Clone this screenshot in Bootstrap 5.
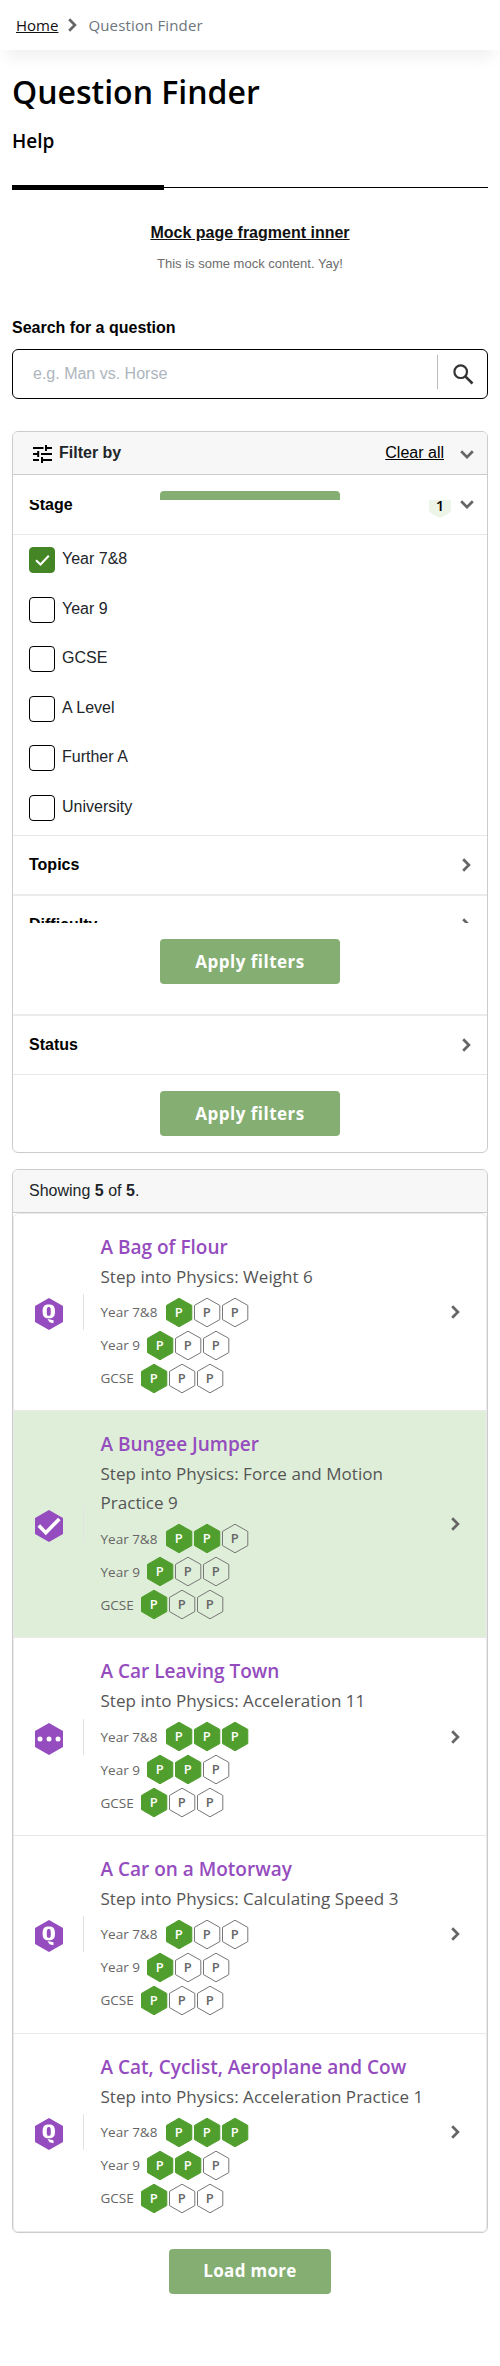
<!DOCTYPE html>
<html lang="en">
<head>
<meta charset="utf-8">
<meta name="viewport" content="width=device-width, initial-scale=1">
<title>Question Finder</title>
<link rel="stylesheet" href="https://cdn.jsdelivr.net/npm/bootstrap@5.3.0/dist/css/bootstrap.min.css">
<style>
body{font-family:"Liberation Sans",Arial,sans-serif;font-size:16px;line-height:24px;color:#212529;background:#fff}
.exo{font-family:"Open Sans","Noto Sans",sans-serif}
.crumbs{height:50px;padding:0 16px;font-size:15px;font-weight:500;background:#fff;box-shadow:0 14px 16px -6px rgba(0,0,0,.06)}
.crumbs a{color:#111}
.crumbs svg{margin:0 11px 0 10px}
.crumbs span{color:#6c757d;letter-spacing:.15px}
.page-title{font-size:32px;font-weight:600;line-height:40px;color:#000;margin:22px 0 0}
.tab-name{font-size:19px;font-weight:600;line-height:28px;color:#000;margin:15px 0 0}
.rule{height:5px;margin-top:30px}
.rule .on{width:152px;height:5px;background:#000}
.rule .off{height:1px;background:#000}
.mock-link{color:#111;font-weight:700;margin-top:31px}
.mock-text{font-size:13px;color:#6c6c6c;line-height:20px;margin-top:9px}
.search-label{font-weight:700;color:#000;margin:42px 0 0;line-height:24px}
.search-box{height:50px;border:1px solid #000;border-radius:6px;margin-top:9px}
.search-box input{border:0;background:none;padding:0 0 0 20px;width:100%;outline:0;color:#212529}
.search-box input::placeholder{color:#adb5bd;opacity:1}
.search-box .sep{width:1px;height:34px;background:#bbb;margin-top:-4px;flex:none}
.search-box svg{flex:none;margin:0 13px 0 15px}
.panel{border:1px solid #ccc;border-radius:6px;overflow:hidden;background:#fff}
.panel-head{height:43px;background:#f7f7f7;border-bottom:1px solid #ccc}
.sec{padding:0 13px 0 16px;font-weight:700;color:#000;height:58px}
.side{margin-right:3px}
.line1{border-bottom:1px solid #e8e8e8}
.line2{border-bottom:2px solid #ebebeb}
.peek{position:absolute;left:0;right:0;top:0;height:25px;background:#fff;padding-top:16px}
.peek span{display:block;width:180px;height:9px;margin:auto;background:#85ae72;border-radius:4px 4px 0 0}
.opts{height:301px;padding:12px 16px 0}
.opt{height:49.6px}
.tick{width:26px;height:26px;border:1px solid #000;border-radius:4px;margin-right:8px;flex:none}
.tick.on{background:#448525;border-color:#448525}
.opt label{line-height:24px;margin-left:-1px}
.go{background:#85ae72!important;color:#fff!important;border:0;border-radius:4px;height:45px;width:180px;padding:0;font-weight:700;font-size:17px;letter-spacing:.5px}
.go.more{width:162px;letter-spacing:.3px}
.q{border:solid #e9e9e9;border-width:0 1px 1px;height:197.6px;padding-left:21px}
.q:first-child{border-top-width:1px;border-radius:6px 6px 0 0;height:198px}
.q:last-child{border-radius:0 0 5px 5px;height:198px}
.q.done{background:#dfeed8;height:227.4px}
.q .hexi{margin:4px 20px 0 0;flex:none}
.q .bar{width:1px;height:36px;background:#e2e2e2;flex:none}
.q .body{padding-left:16.5px;margin-top:2px}
.q h3{font-size:19px;font-weight:600;line-height:30px;color:#944cbe;margin:0;white-space:nowrap}
.q .sub{font-size:17px;line-height:29px;color:#555;white-space:nowrap;margin-bottom:5px;letter-spacing:.04px}
.lvl{height:33px;font-size:13.5px;color:#666}
.lvl span{white-space:nowrap}
.w1{width:65px}.w2{width:46px}.w3{width:40px}
.lvl svg{display:block;width:84px;height:31px}
.lvl text{font:600 13px "Open Sans",sans-serif;text-anchor:middle;fill:#666}
.lvl .f text{fill:#fff}
.lvl polygon{fill:none;stroke:#777;stroke-width:1}
.lvl .f polygon{fill:#509e2e;stroke:#509e2e}
.q .chev{margin-right:26px}
</style>
</head>
<body>
<svg class="d-none">
<symbol id="right" viewBox="0 0 9 14"><path d="M1.200 1.200 6.900 7l-5.700 5.800" fill="none" stroke="#666" stroke-width="2.700"/></symbol>
<symbol id="down" viewBox="0 0 14 9"><path d="M1.200 1.300 7 7.100l5.800-5.800" fill="none" stroke="#666" stroke-width="2.700"/></symbol>
<symbol id="qi" viewBox="0 0 28 32"><path fill="#944cbe" d="M14 0 28 8v16l-14 8L0 24V8z"/><path fill="#fff" fill-rule="evenodd" d="M13.800 6.500c4.300 0 6.200 1.800 6.200 6.900 0 5-1.900 6.900-6.200 6.900s-6.200-1.900-6.200-6.900c0-5.100 1.900-6.900 6.200-6.900zm0 2.500c-1.500 0-2 .9-2 4.400s.5 4.400 2 4.400 2-.9 2-4.400-.5-4.400-2-4.400zM12.500 21l6 1.300v2.900l-4-.9z"/></symbol>
<symbol id="ci" viewBox="0 0 28 32"><path fill="#944cbe" d="M14 0 28 8v16l-14 8L0 24V8z"/><path d="m3.800 15.500 7 7.200L24.300 9" fill="none" stroke="#fff" stroke-width="3.600"/></symbol>
<symbol id="di" viewBox="0 0 28 32"><path fill="#944cbe" d="M14 0 28 8v16l-14 8L0 24V8z"/><g fill="#fff"><circle cx="5" cy="16" r="2.500"/><circle cx="14" cy="16" r="2.500"/><circle cx="23" cy="16" r="2.500"/></g></symbol>
</svg>

<nav class="crumbs exo d-flex align-items-center">
<a href="#">Home</a>
<svg width="9" height="14"><use href="#right"/></svg>
<span>Question Finder</span>
</nav>

<main style="padding:0 12px">
<h1 class="page-title exo">Question Finder</h1>
<h2 class="tab-name exo">Help</h2>
<div class="rule d-flex align-items-center"><div class="on"></div><div class="off flex-grow-1"></div></div>
<div class="text-center mock-link"><a href="#" class="text-reset">Mock page fragment inner</a></div>
<div class="text-center mock-text">This is some mock content. Yay!</div>

<div class="search-label">Search for a question</div>
<div class="search-box d-flex align-items-center">
<input type="text" placeholder="e.g. Man vs. Horse">
<span class="sep"></span>
<svg width="21" height="21" viewBox="0 0 21 21" fill="none" stroke="#333"><circle cx="7.700" cy="7.700" r="6.300" stroke-width="2.200"/><path d="m12.300 12.300 7.200 7.200" stroke-width="2.600"/></svg>
</div>

<section class="panel" style="margin-top:32px;height:722px">
<div class="panel-head d-flex align-items-center" style="padding:0 13px 0 20px">
<svg width="19" height="18" viewBox="0 0 19 18" fill="none" stroke="#000" stroke-width="2" style="margin-top:2px"><path d="M0 3h10.500M13 0v6M13 3h6M0 9h5.500M5.200 6v6M8 9h11M0 15h6M9 12v6M9 15h10"/></svg>
<strong style="margin-left:7px">Filter by</strong>
<a href="#" class="ms-auto" style="color:#000">Clear all</a>
<svg width="14" height="9" style="margin:2px 0 0 16px"><use href="#down"/></svg>
</div>
<div class="sec line1 d-flex align-items-center position-relative" style="height:60px">
<span>Stage</span>
<svg width="22" height="26" viewBox="0 0 22 26" class="ms-auto exo"><path fill="#ecf5e8" d="M11 0 22 6v14l-11 6-11-6V6z"/><text x="11" y="18.500" text-anchor="middle" font-size="15" font-weight="600">1</text></svg>
<svg width="14" height="9" style="margin-left:9px"><use href="#down"/></svg>
<div class="peek"><span></span></div>
</div>
<div class="opts line1">
<div class="opt d-flex align-items-start"><span class="tick on"><svg width="24" height="24" viewBox="0 0 24 24" class="d-block" fill="none" stroke="#fff" stroke-width="2"><path d="m6 12.200 4.500 4.300 8.300-8.700"/></svg></span><label>Year 7&amp;8</label></div>
<div class="opt d-flex align-items-start"><span class="tick"></span><label>Year 9</label></div>
<div class="opt d-flex align-items-start"><span class="tick"></span><label>GCSE</label></div>
<div class="opt d-flex align-items-start"><span class="tick"></span><label>A Level</label></div>
<div class="opt d-flex align-items-start"><span class="tick"></span><label>Further A</label></div>
<div class="opt d-flex align-items-start"><span class="tick"></span><label>University</label></div>
</div>
<div class="sec line2 d-flex align-items-center justify-content-between" style="height:60px"><span>Topics</span><svg class="side" width="9" height="14"><use href="#right"/></svg></div>
<div class="overflow-hidden" style="height:27px"><div class="sec d-flex align-items-center justify-content-between"><span>Difficulty</span><svg class="side" width="9" height="14"><use href="#right"/></svg></div></div>
<div class="line2 text-center" style="height:93px;padding-top:16px"><button class="btn go exo">Apply filters</button></div>
<div class="sec line1 d-flex align-items-center justify-content-between" style="height:59px"><span>Status</span><svg class="side" width="9" height="14"><use href="#right"/></svg></div>
<div class="text-center" style="padding-top:16px"><button class="btn go exo">Apply filters</button></div>
</section>

<section class="panel" style="margin-top:16px">
<div class="panel-head d-flex align-items-center" style="padding-left:16px"><span>Showing <strong>5</strong> of <strong>5</strong>.</span></div>
<div id="results"></div>
</section>
<div class="text-center" style="margin-top:16px"><button class="btn go more exo">Load more</button></div>
</main>

<script src="https://cdn.jsdelivr.net/npm/bootstrap@5.3.0/dist/js/bootstrap.bundle.min.js"></script>
<script>
const questions = [
  ["A Bag of Flour", "Weight 6", "qi", [1,1,1]],
  ["A Bungee Jumper", "Force and Motion<br>Practice 9", "ci", [2,1,1]],
  ["A Car Leaving Town", "Acceleration 11", "di", [3,2,1]],
  ["A Car on a Motorway", "Calculating Speed 3", "qi", [1,1,1]],
  ["A Cat, Cyclist, Aeroplane and Cow", "Acceleration Practice 1", "qi", [3,2,1]]
];
const stages = ["Year 7&amp;8", "Year 9", "GCSE"];
const hexes = n => [0,1,2].map(i => `<g class="${i < n ? "f" : ""}" transform="translate(${i*28} 0)"><polygon points="13,1.200 25.800,8.400 25.800,22.600 13,29.800 .5,22.600 .5,8.400"/><text x="12.800" y="19.700">P</text></g>`).join("");
document.getElementById("results").innerHTML = questions.map(([t, s, icon, lv]) => `
<article class="q exo d-flex align-items-center ${icon === "ci" ? "done" : ""}">
<svg class="hexi" width="28" height="32"><use href="#${icon}"/></svg><span class="bar"></span>
<div class="body"><h3>${t}</h3><div class="sub">Step into Physics: ${s}</div>
${stages.map((y, k) => `<div class="lvl d-flex align-items-center"><span class="w${k+1}">${y}</span><svg>${hexes(lv[k])}</svg></div>`).join("")}</div>
<svg class="chev ms-auto" width="9" height="14"><use href="#right"/></svg>
</article>`).join("");
</script>
</body>
</html>
